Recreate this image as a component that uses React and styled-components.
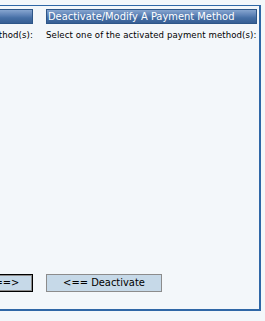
import React from 'react'
import styled, { createGlobalStyle } from 'styled-components'

const Global = createGlobalStyle`
  html, body {
    margin: 0;
    padding: 0;
    background: #f3f7fa;
    overflow: hidden;
  }
  body {
    font-family: "DejaVu Sans Condensed", "DejaVu Sans", Tahoma, sans-serif;
    font-size: 11px;
    color: #000;
  }
`

const Frame = styled.div`
  margin-top: 5px;
  margin-left: -182px;
  width: 443px;
  height: 306px;
  border-top: 1px solid #2f67a6;
  border-left: 1px solid #2f67a6;
  border-right: 2px solid #2f67a6;
  border-bottom: 2px solid #2f67a6;
  box-sizing: border-box;
  padding: 3px 2px 0 3px;
  display: grid;
  grid-template-columns: 211px 211px;
  grid-template-rows: auto 1fr auto;
  column-gap: 13px;
`

const Header = styled.div`
  height: 15px;
  box-sizing: border-box;
  border: 1px solid #2d5688;
  background: linear-gradient(#86a5cf 0%, #5d82b6 40%, #4670a6 60%, #375f94 100%);
  color: #fff;
  font-size: 11px;
  line-height: 13px;
  padding-left: 1px;
  white-space: nowrap;
  overflow: hidden;
`

const Prompt = styled.div`
  margin-top: 5px;
  white-space: nowrap;
  font-size: 9.5px;
  letter-spacing: 0.1px;
  line-height: 12px;
  align-self: ${p => (p.$end ? 'flex-end' : 'flex-start')};
`

const Cell = styled.div`
  display: flex;
  flex-direction: column;
`

const ButtonCell = styled.div`
  display: flex;
  justify-content: ${p => (p.$end ? 'flex-end' : 'flex-start')};
  padding-bottom: 17px;
`

const Button = styled.button`
  height: 18px;
  width: ${p => p.$w}px;
  box-sizing: border-box;
  background: #c6d9e8;
  border: 1px solid ${p => (p.$default ? '#000' : '#8c8c8c')};
  box-shadow: ${p => (p.$default ? 'inset 0 0 0 1px #8c8c8c' : 'none')};
  font-family: "DejaVu Sans Condensed", "DejaVu Sans", Tahoma, sans-serif;
  font-size: 11px;
  color: #000;
  padding: 0;
  line-height: 14px;
`

export default function App() {
  return (
    <>
      <Global />
      <Frame>
        <Cell>
          <Header>Activate A Payment Method</Header>
          <Prompt $end>Select one of the deactivated payment method(s):</Prompt>
        </Cell>
        <Cell>
          <Header>Deactivate/Modify A Payment Method</Header>
          <Prompt>Select one of the activated payment method(s):</Prompt>
        </Cell>
        <div />
        <div />
        <ButtonCell $end>
          <Button $w={96} $default>Activate ==&gt;</Button>
        </ButtonCell>
        <ButtonCell>
          <Button $w={116}>&lt;== Deactivate</Button>
        </ButtonCell>
      </Frame>
    </>
  )
}
